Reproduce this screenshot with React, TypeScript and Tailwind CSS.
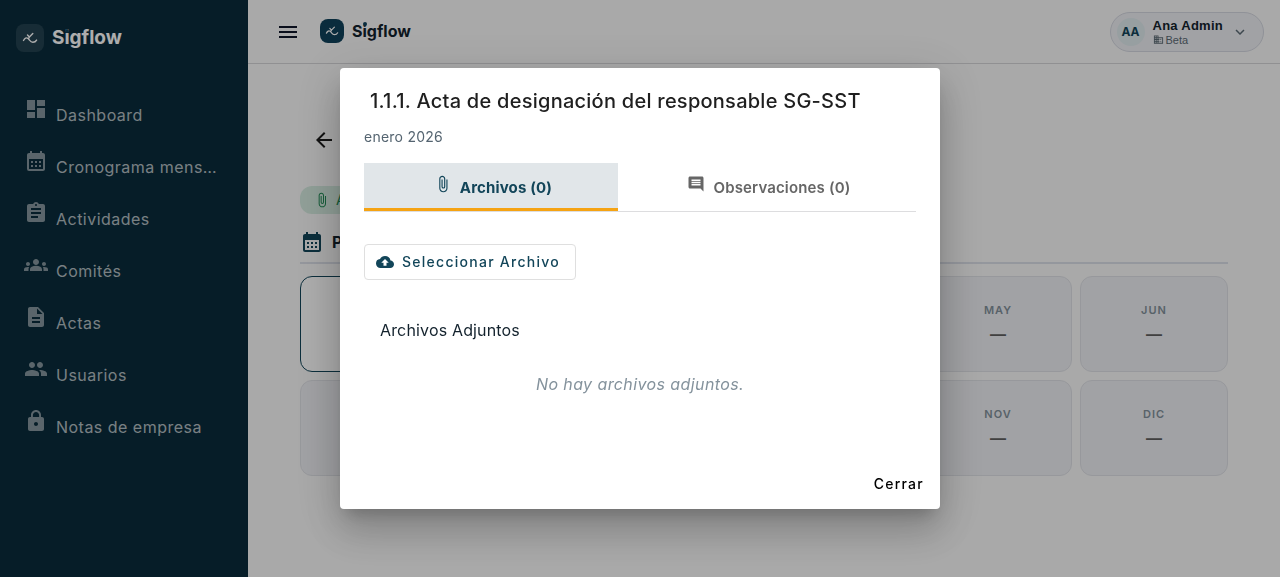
import React, { useState } from 'react';
import {
  MdArrowBack,
  MdAssignment,
  MdAttachFile,
  MdBusiness,
  MdCalendarMonth,
  MdCloudUpload,
  MdComment,
  MdDashboard,
  MdDescription,
  MdExpandMore,
  MdGroup,
  MdGroups,
  MdLock,
  MdMenu,
} from 'react-icons/md';

const NAV_ITEMS = [
  { label: 'Dashboard', icon: MdDashboard },
  { label: 'Cronograma mensual', icon: MdCalendarMonth },
  { label: 'Actividades', icon: MdAssignment },
  { label: 'Comités', icon: MdGroups },
  { label: 'Actas', icon: MdDescription },
  { label: 'Usuarios', icon: MdGroup },
  { label: 'Notas de empresa', icon: MdLock },
];

const MONTHS = ['ENE', 'FEB', 'MAR', 'ABR', 'MAY', 'JUN', 'JUL', 'AGO', 'SEP', 'OCT', 'NOV', 'DIC'];

const LogoMark = ({ className }: { className: string }) => (
  <svg viewBox="0 0 28 28" fill="none" stroke="currentColor" strokeWidth="1.4" strokeLinecap="round" strokeLinejoin="round" className={className}>
    <path d="M7.500 16.500c1.300-2.400 2.800-3.200 4.300-2.200 1.900 1.400 2.400 4 5 4 1.800 0 3-.7 3.800-2.200" />
    <path d="M11.500 11l1.900 2L16.800 9.500M13.400 13l-1 1.500" />
  </svg>
);

// Wordmark with the accent-coloured dot over the "i"
const Wordmark = () => (
  <span className="relative leading-6">
    Sigflow
    <span className="absolute top-[3px] left-[18%] size-1 rounded-full bg-[#10415a]" />
  </span>
);

const Sidebar = () => (
  <aside className="w-62 shrink-0 bg-[#0a2c3c] text-white">
    <div className="flex items-center gap-2 px-4 pt-6 text-[19px] font-bold">
      <span className="flex size-7 items-center justify-center rounded-lg bg-white/10">
        <LogoMark className="size-7" />
      </span>
      <Wordmark />
    </div>
    <nav className="mt-[37px] flex flex-col px-6">
      {NAV_ITEMS.map(({ label, icon: Icon }) => (
        <a key={label} href="#" className="flex h-13 items-center gap-2 text-white/70">
          <Icon className="mb-3 size-6 shrink-0 text-white/50" />
          <span className="truncate text-base tracking-[0.03em]">{label}</span>
        </a>
      ))}
    </nav>
  </aside>
);

const Header = () => (
  <header className="flex h-16 items-center border-b border-[#d5d5d8] pr-4 pl-7">
    <button aria-label="Menú" className="text-[#0f172a]">
      <MdMenu size={24} />
    </button>
    <div className="ml-5 flex items-center gap-2 pb-0.5 font-bold text-[#13222d]">
      <span className="flex size-6 items-center justify-center rounded-lg bg-[#10415a] text-white">
        <LogoMark className="size-6" />
      </span>
      <Wordmark />
    </div>
    <button className="ml-auto flex h-10 items-center rounded-full border border-[#d4d7e0] bg-[#eeeff3] pr-3.5 pl-1.5 text-left">
      <span className="flex size-7 items-center justify-center rounded-full bg-[#dfeaee] text-xs font-bold text-[#124559]">AA</span>
      <span className="ml-2 flex flex-col">
        <span className="font-['Liberation_Sans',sans-serif] text-[13px] leading-4 font-bold tracking-[0.02em] text-[#13222d]">Ana Admin</span>
        <span className="flex items-center gap-0.5 font-['Liberation_Sans',sans-serif] text-[11px] leading-3 text-[#5c6b75]">
          <MdBusiness size={11} /> Beta
        </span>
      </span>
      <MdExpandMore size={18} className="ml-2 text-[#5c6b75]" />
    </button>
  </header>
);

const MonthPanel = () => (
  <main className="px-13 pt-16">
    <button aria-label="Volver" className="flex h-6 items-center pl-3 text-[#1c1c1c]">
      <MdArrowBack size={24} />
    </button>
    <div className="mt-[34px] flex">
      <span className="flex h-7 items-center gap-1.5 rounded-xl bg-[#d5ebe0] px-3.5 text-sm text-[#218a55]">
        <MdAttachFile size={16} /> Archivos
      </span>
    </div>
    <div className="mt-2 flex h-[42px] items-center gap-2 border-b-2 border-[#dbdfe8] text-base font-bold text-[#13222d]">
      <MdCalendarMonth size={24} className="text-[#124559]" />
      Programación mensual
    </div>
    <div className="mt-3 grid grid-cols-6 gap-2">
      {MONTHS.map((month, i) => (
        <button
          key={month}
          className={`flex h-24 flex-col items-center justify-center gap-1 rounded-xl border ${i === 0 ? 'border-[#124559] bg-white' : 'border-[#dfe1e6] bg-[#eeeff3]'}`}
        >
          <span className="text-[11px] leading-4 font-semibold tracking-[0.09em] text-[#82919b]">{month}</span>
          <span className="text-base leading-6 font-semibold text-[#5f5f5f]">—</span>
        </button>
      ))}
    </div>
  </main>
);

type Tab = 'archivos' | 'observaciones';

const AttachmentsDialog = ({ onClose }: { onClose: () => void }) => {
  const [tab, setTab] = useState<Tab>('archivos');

  const tabClass = (value: Tab) =>
    tab === value
      ? 'bg-[#e1e6e9] font-bold text-[#124559] shadow-[inset_0_-3px_0_#f5a313]'
      : 'font-semibold text-[#666666]';

  return (
    <div className="fixed inset-0 flex items-center justify-center bg-black/32 p-4">
      <div
        role="dialog"
        aria-modal="true"
        aria-labelledby="dialog-title"
        className="w-full max-w-150 rounded bg-white shadow-[0_11px_15px_-7px_rgba(0,0,0,0.2),0_24px_38px_3px_rgba(0,0,0,0.14),0_9px_46px_8px_rgba(0,0,0,0.12)]"
      >
        <div className="px-6 pt-[17px]">
          <h2 id="dialog-title" className="pl-1.5 text-xl leading-8 font-medium tracking-[0.0125em] text-[#1f1f1f]">
            1.1.1. Acta de designación del responsable SG-SST
          </h2>
          <p className="mt-2.5 text-sm leading-5 tracking-[0.0175em] text-[#546470]">enero 2026</p>

          {/* Tabs */}
          <div role="tablist" className="mt-4 flex border-b border-[#dddddf]">
            <button
              role="tab"
              aria-selected={tab === 'archivos'}
              onClick={() => setTab('archivos')}
              className={`flex h-12 w-[46%] items-center justify-center gap-2 pt-0.5 pl-1 text-[15px] tracking-[0.01em] ${tabClass('archivos')}`}
            >
              <MdAttachFile size={18} className="mb-2" /> Archivos (0)
            </button>
            <button
              role="tab"
              aria-selected={tab === 'observaciones'}
              onClick={() => setTab('observaciones')}
              className={`flex h-12 w-[54%] items-center justify-center gap-2 pt-0.5 pl-1 text-[15px] tracking-[0.01em] ${tabClass('observaciones')}`}
            >
              <MdComment size={18} className="mb-2" /> Observaciones (0)
            </button>
          </div>

          <button className="mt-8 flex h-9 items-center gap-2 rounded border border-[#dfdfdf] pr-[15px] pl-[11px] text-sm font-medium tracking-[0.09em] text-[#124559]">
            <MdCloudUpload size={18} /> Seleccionar Archivo
          </button>

          <div className="px-4 pt-9">
            <h3 className="text-base leading-7 tracking-[0.01em] text-[#13222d]">Archivos Adjuntos</h3>
            <p className="mt-6 pb-[57px] text-center text-base leading-8 tracking-wide text-[#84929c] italic">No hay archivos adjuntos.</p>
          </div>
        </div>

        <div className="flex justify-end p-2">
          <button onClick={onClose} className="h-9 px-2 pt-0.5 text-sm font-medium tracking-[0.09em] text-black">
            Cerrar
          </button>
        </div>
      </div>
    </div>
  );
};

export default function App() {
  const [open, setOpen] = useState(true);

  return (
    <div className="flex min-h-screen bg-[#fafafa] font-['Inter',sans-serif]">
      <Sidebar />
      <div className="min-w-0 flex-1">
        <Header />
        <MonthPanel />
      </div>
      {open && <AttachmentsDialog onClose={() => setOpen(false)} />}
    </div>
  );
}
